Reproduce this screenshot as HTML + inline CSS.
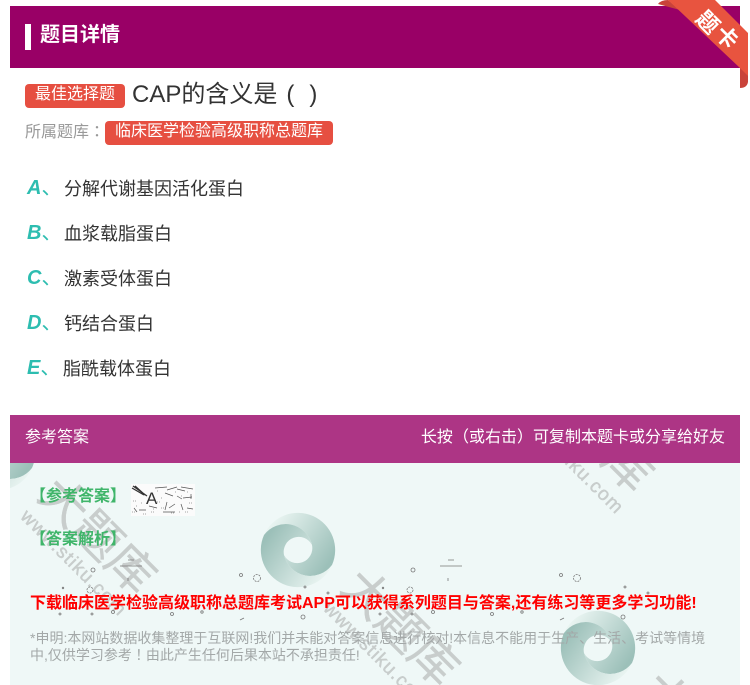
<!DOCTYPE html>
<html><head><meta charset="utf-8">
<style>
*{margin:0;padding:0;box-sizing:border-box}
html,body{width:750px;height:685px;overflow:hidden;background:#fff}
body{font-family:"Liberation Sans","Noto Sans CJK SC",sans-serif}
#r{position:relative;width:750px;height:685px;overflow:hidden;filter:blur(.3px)}
.a{position:absolute;white-space:nowrap}
.tc{font-family:"Noto Sans CJK TC",sans-serif;line-height:0}
.tag{background:#e64f41;color:#fff;border-radius:4px;font-size:16px;text-align:center}
.L{left:27px;font-size:20px;font-weight:bold;font-style:italic;color:#2dbdb0;line-height:24px}
.L span{font-style:normal;font-weight:normal}
.O{left:64px;font-size:18px;color:#333;line-height:24px}
</style></head><body><div id="r">
<div class="a" style="left:10px;top:6px;width:730px;height:62px;background:#990066"></div>
<div class="a" style="left:25px;top:24px;width:6px;height:26px;background:#fff"></div>
<div class="a" style="left:40px;top:21px;font-size:20px;font-weight:bold;color:#fff;line-height:28px">题目详情</div>

<svg class="a" style="left:640px;top:0" width="110" height="100" viewBox="640 0 110 100">
<path d="M658 4 Q661 0 668 0 L680 10 Z" fill="#c9433a"/>
<path d="M740 66 L748 74 V82 Q747 88 740 88 Z" fill="#c9433a"/>
<polygon points="668,0 715,0 748,33 748,76 740,68" fill="#e8543f"/>
<text x="708" y="30" font-size="22" font-weight="bold" fill="#fff" text-anchor="middle" transform="rotate(45 708 22)">题</text>
<text x="727" y="45" font-size="22" font-weight="bold" fill="#fff" text-anchor="middle" transform="rotate(45 727 37)">卡</text>
</svg>

<div class="a tag" style="left:25px;top:84px;width:100px;height:24px;line-height:22px">最佳选择题</div>
<div class="a" style="left:132px;top:79px;font-size:24px;color:#333;line-height:32px">CAP的含义是<span style="margin-left:9px">(</span><span style="margin-left:15px">)</span></div>
<div class="a" style="left:25px;top:121px;font-size:16px;color:#999;line-height:24px">所属题库<span class="tc">：</span></div>
<div class="a tag" style="left:105px;top:121px;width:228px;height:24px;line-height:22px">临床医学检验高级职称总题库</div>

<div class="a L" style="top:176px">A<span>、</span></div><div class="a O" style="top:177px">分解代谢基因活化蛋白</div>
<div class="a L" style="top:221px">B<span>、</span></div><div class="a O" style="top:222px">血浆载脂蛋白</div>
<div class="a L" style="top:266px">C<span>、</span></div><div class="a O" style="top:267px">激素受体蛋白</div>
<div class="a L" style="top:311px">D<span>、</span></div><div class="a O" style="top:312px">钙结合蛋白</div>
<div class="a L" style="top:356px">E<span>、</span></div><div class="a O" style="top:357px;left:63px">脂酰载体蛋白</div>

<div class="a" style="left:10px;top:415px;width:730px;height:48px;background:#ad3585"></div>
<div class="a" style="left:25px;top:426px;font-size:16px;color:#fff;line-height:24px">参考答案</div>
<div class="a" style="right:25px;top:426px;font-size:16px;color:#fff;line-height:24px">长按<span class="tc">（</span>或右击<span class="tc">）</span>可复制本题卡或分享给好友</div>

<div class="a" style="left:10px;top:463px;width:730px;height:222px;background:#eff8f7"></div>

<svg class="a" style="left:0;top:0;overflow:hidden" width="750" height="685" viewBox="0 0 750 685">
<defs>
<clipPath id="c"><rect x="10" y="463" width="730" height="222"/></clipPath>
<linearGradient id="g" gradientUnits="userSpaceOnUse" x1="-28" y1="-26" x2="30" y2="14">
<stop offset="0" stop-color="#eaf5f2"/><stop offset="1" stop-color="#9cc0b9"/></linearGradient>
<g id="s">
<path d="M-34,-15 A37,37 0 0 1 34,15 A27,27 0 0 1 -14,5 A15,15 0 0 0 14,-5 A27,27 0 0 0 -34,-15 Z" fill="url(#g)"/>
<path d="M-34,-15 A37,37 0 0 1 34,15 A27,27 0 0 1 -14,5 A15,15 0 0 0 14,-5 A27,27 0 0 0 -34,-15 Z" fill="url(#g)" transform="rotate(180)"/>
</g>
<g id="w" fill="#c8cdcc" stroke="#c8cdcc" stroke-width=".4">
<text x="0" y="17" font-size="47" text-anchor="middle">大题库</text>
<text x="-68" y="43" font-size="19" textLength="140" font-family="Liberation Sans" stroke-width=".5">www.stiku.com</text>
</g>
<g id="d" fill="none" stroke="#777" stroke-width=".8">
<circle cx="93" cy="570" r="2"/><circle cx="241" cy="575" r="1.5"/><circle cx="257" cy="578" r="3.5" stroke-dasharray="2 1"/>
<circle cx="90" cy="590" r="3" stroke-dasharray="2 1"/><circle cx="63" cy="588" r=".8"/><circle cx="60" cy="614" r="1"/>
<circle cx="92" cy="614" r="1"/><circle cx="113" cy="612" r="1.5"/><circle cx="172" cy="614" r="1.5"/><circle cx="202" cy="612" r="1.2"/>
<path d="M240 620l4-2M120 566h22M128 560h6M128 578v3"/>
<circle cx="303" cy="617" r="2"/><circle cx="305" cy="587" r="1"/><circle cx="328" cy="593" r="1"/>
</g>
</defs>
<g clip-path="url(#c)">
<use href="#s" transform="translate(298,550)"/>
<use href="#s" transform="translate(598,648)"/>
<use href="#s" transform="translate(-2,453)"/>
<use href="#w" transform="translate(98,535) rotate(45)"/>
<use href="#w" transform="translate(595,433) rotate(45)"/>
<use href="#w" transform="translate(401,627) rotate(45)"/>
<use href="#w" transform="translate(700,730) rotate(45)"/>
<use href="#d"/>
<use href="#d" transform="translate(320,0)"/>
</g>
</svg>

<div class="a" style="left:30px;top:485px;font-size:16px;font-weight:bold;color:#3fb56a;line-height:24px">【参考答案】</div>
<svg class="a" style="left:131px;top:484px" width="64" height="32" viewBox="0 0 64 32">
<rect width="64" height="32" fill="#fbfbfb"/>
<g stroke="#555" stroke-width=".7" fill="none">
<path d="M2 2l14 10M4 2l10 9M1 4l12 7" stroke-width="1.3" stroke="#333"/>
<path d="M24 4l12-1M36 6l10-3M46 5l8 2M50 3l12 2M3 24l3 4M8 26h7M18 22l8 2M36 18l-2 8M32 28h12M44 20l-6 4M50 20l2 6M56 24l6 1M60 10v5M46 12l5 3M34 9l8 3M52 14l9-1"/>
<path d="M2 17h3M10 19h2M20 28h4M30 14h2M54 28h3M26 7h2M50 12h2M5 22h2M12 30h3M22 25h2M40 29h4M58 19h3M48 28h2M1 28h3M26 18h3M44 8h2M56 8h2M30 24h3" stroke="#888" stroke-dasharray="1 1"/>
</g>
<text x="15" y="20" font-size="17" fill="#333" font-family="Liberation Sans">A</text>
</svg>
<div class="a" style="left:30px;top:528px;font-size:16px;font-weight:bold;color:#3fb56a;line-height:24px">【答案解析】</div>
<div class="a" style="left:30px;top:592px;font-size:16px;font-weight:bold;color:#f00;line-height:24px;letter-spacing:0">下载临床医学检验高级职称总题库考试APP可以获得系列题目与答案,还有练习等更多学习功能!</div>
<div class="a" style="left:30px;top:630px;font-size:14px;color:#a3a8a8;line-height:17px">*申明:本网站数据收集整理于互联网!我们并未能对答案信息进行核对!本信息不能用于生产、生活、考试等情境<br>中,仅供学习参考<span class="tc">！</span>由此产生任何后果本站不承担责任!</div>
</div></body></html>
